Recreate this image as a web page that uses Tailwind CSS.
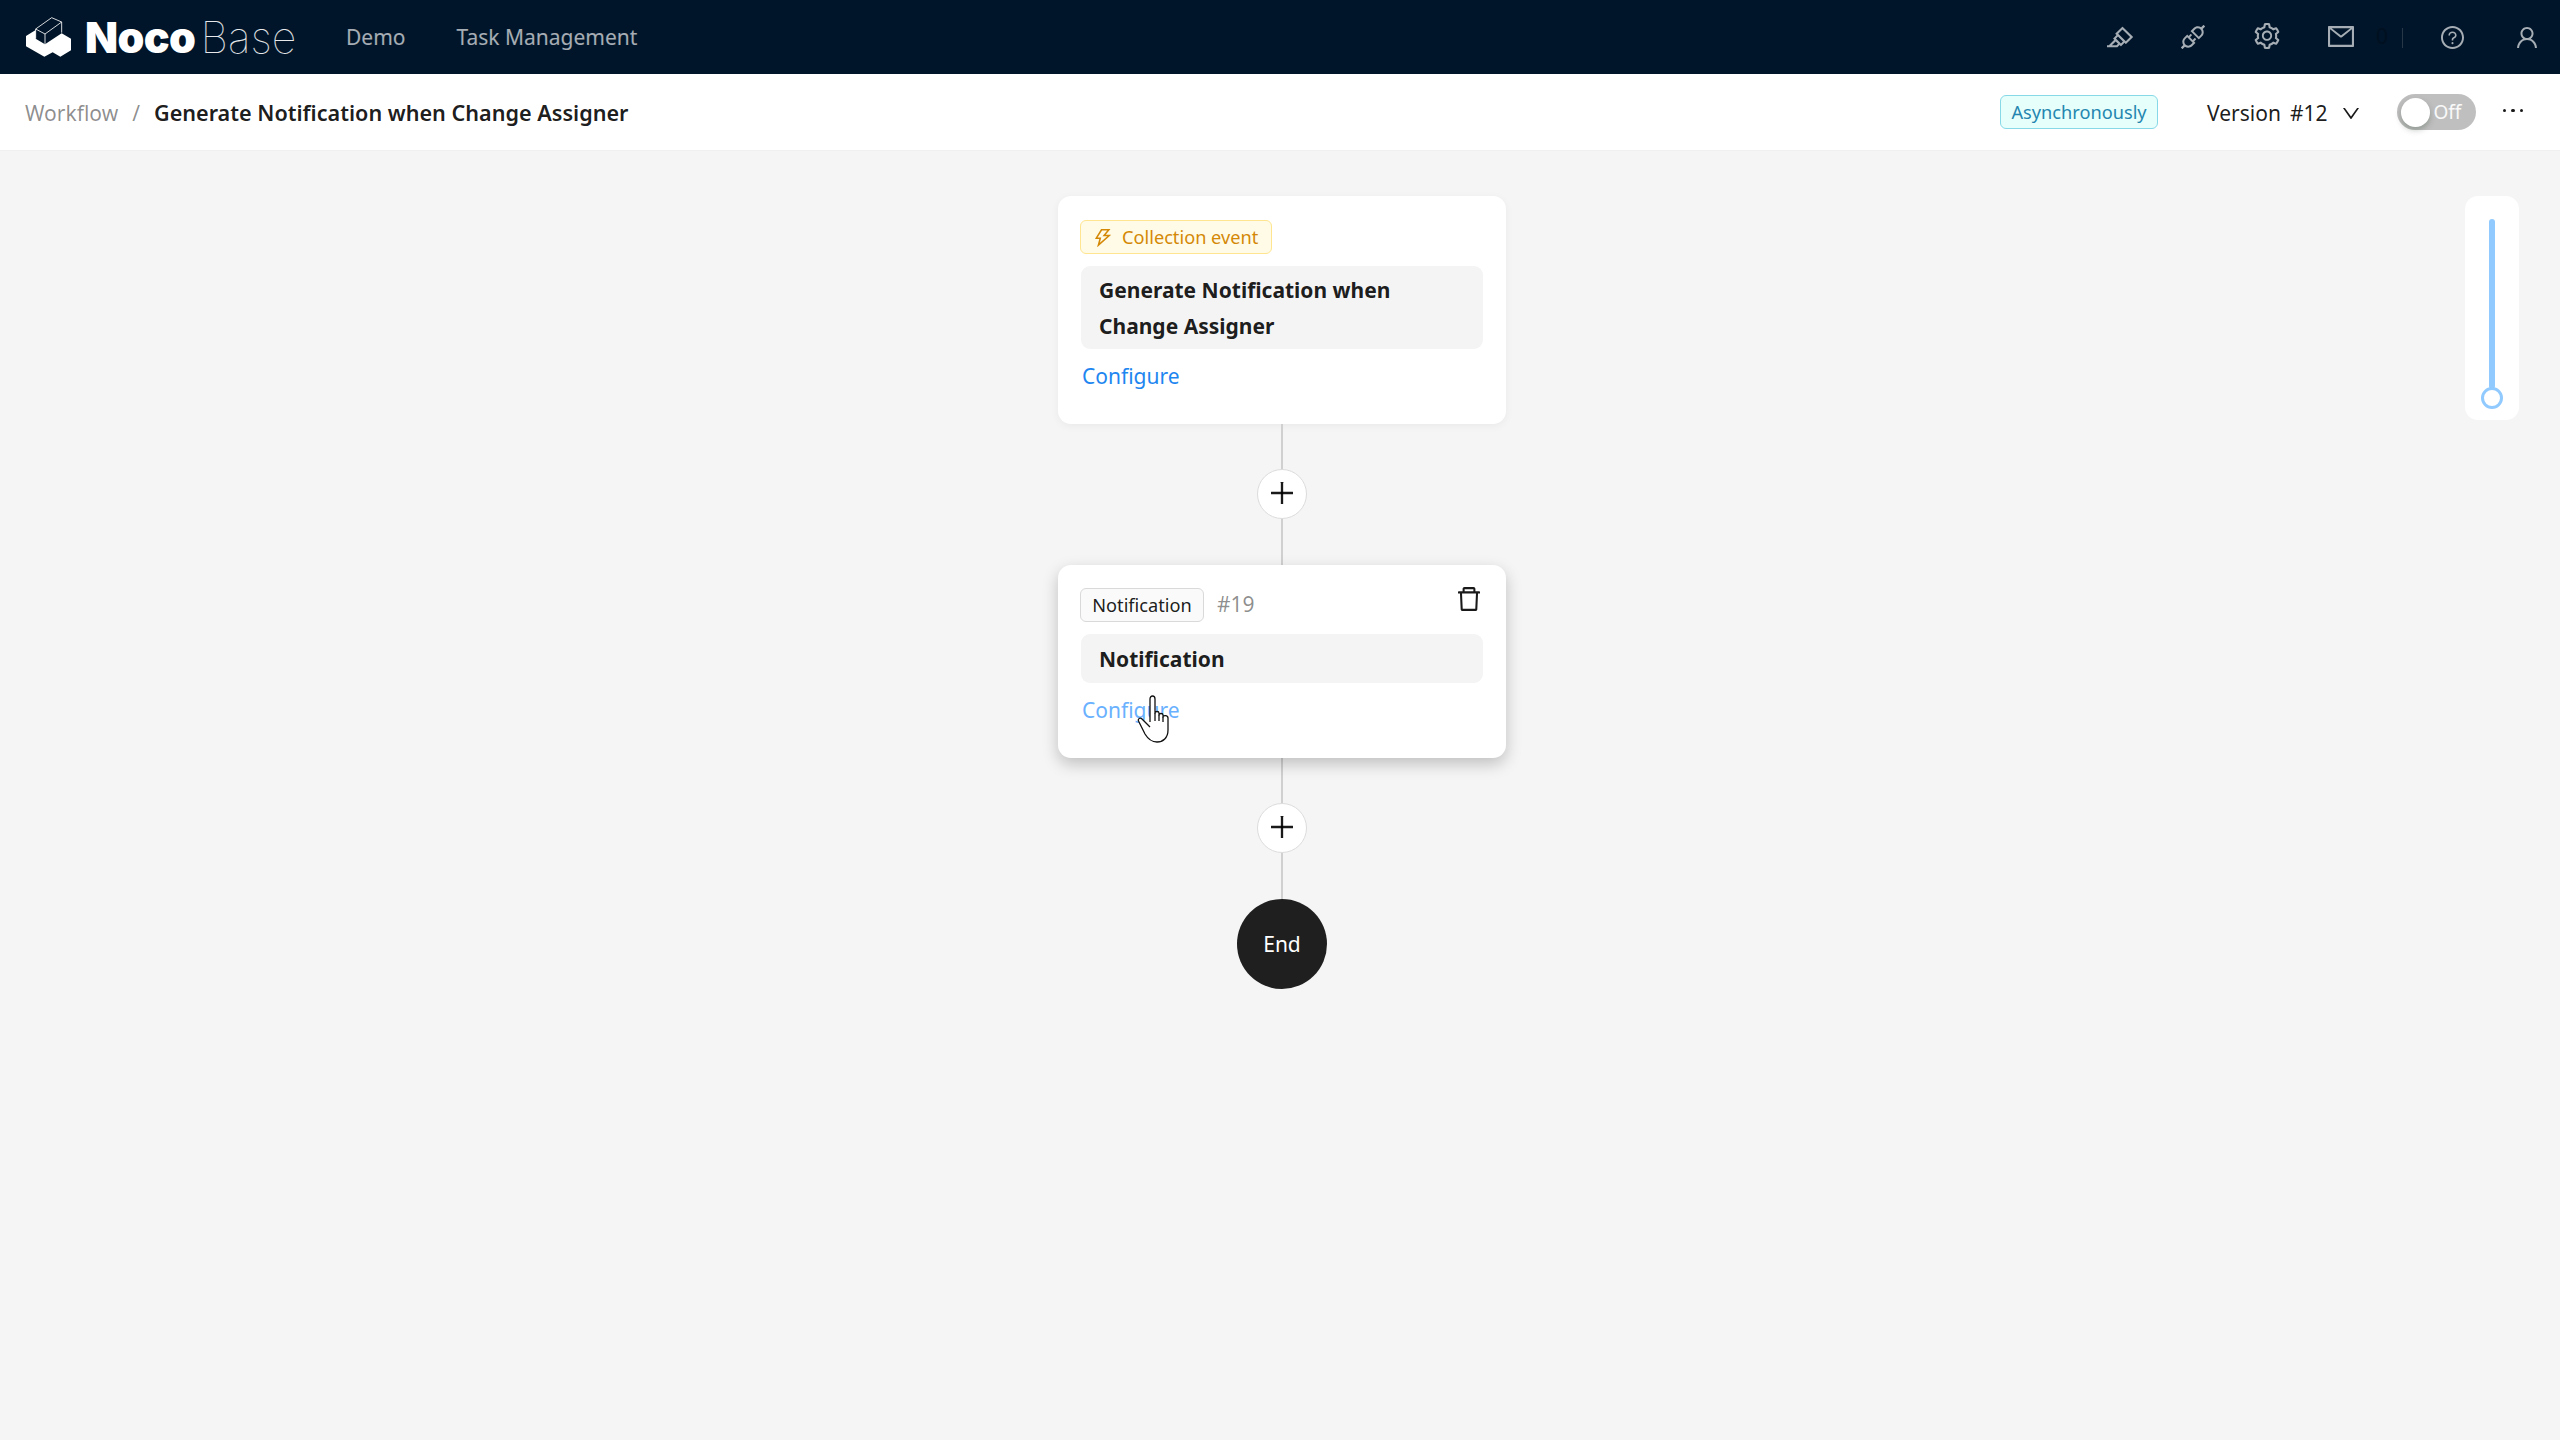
<!DOCTYPE html>
<html lang="en">
  <head>
    <meta charset="UTF-8" />
    <title>NocoBase Workflow</title>
    <script src="https://cdn.jsdelivr.net/npm/@tailwindcss/browser@4"></script>
  </head>
  <body class="bg-[#f5f5f5] font-['Noto_Sans',sans-serif] text-[21px] text-black/90">
    <div class="relative flex flex-col h-[1440px] overflow-hidden">
      <!-- Top nav -->
      <header class="flex items-center h-[74px] bg-[#001529] shrink-0">
        <div class="flex items-center pl-[26px] w-[346px] shrink-0">
          <svg class="w-[45px] h-[40px] shrink-0" viewBox="78 52 135 118">
            <path fill="#fff" d="M78 108L107 90V116L135 133L185 100L213 116V151L181 170L158 157L133 170L78 139Z" />
            <path fill="none" stroke="#fff" stroke-width="2.5" d="M107 87L155 53L185 66V98M107 87L135 102V132M107 87V116M135 102L185 66" />
          </svg>
          <span class="ml-[14px] font-['Inter',sans-serif] font-black text-[43px] leading-none text-white tracking-[-0.6px]">Noco</span>
          <span class="ml-[5px] font-['Inter',sans-serif] font-thin text-[43px] leading-none text-white/90 tracking-[0px]">Base</span>
        </div>
        <nav class="flex items-center gap-[51px] text-white/65 pt-[2px]">
          <a>Demo</a>
          <a>Task Management</a>
        </nav>
        <div class="ml-auto flex items-center text-white/65 h-full pr-[23px]">
          <svg class="w-[26px] h-[26px] fill-current" viewBox="64 128 896 768"><path d="M957.6 507.4L603.2 158.2a7.9 7.9 0 0 0-11.2 0L353.3 393.4a8.03 8.03 0 0 0-.1 11.3l.1.1 40 39.4-117.2 115.3a8.03 8.03 0 0 0-.1 11.3l.1.1 39.5 38.9-189.1 187H72.1c-4.4 0-8.1 3.6-8.1 8V860c0 4.4 3.6 8 8 8h344.9c2.1 0 4.1-.8 5.6-2.3l76.1-75.6 40.4 39.8a7.9 7.9 0 0 0 11.2 0l117.1-115.6 40.1 39.5a7.9 7.9 0 0 0 11.2 0l238.7-235.2c3.4-3 3.4-8 .3-11.2zM389.8 796.2H229.6l134.4-133 80.1 78.9-54.3 54.1zm154.8-62.1L373.2 565.2l68.6-67.6 171.4 168.9-68.6 67.6zM713.1 658L450.3 399.1 597.6 254l262.8 259-147.3 145z"/></svg>
          <svg class="ml-[48px] w-[24px] h-[24px] fill-current" viewBox="104 104 816 816"><path d="M917.7 148.8l-42.4-42.4c-1.6-1.6-3.6-2.3-5.7-2.3s-4.1.8-5.7 2.3l-76.1 76.1a199.27 199.27 0 0 0-112.1-34.3c-51.2 0-102.4 19.5-141.5 58.6L432.3 308.7a8.03 8.03 0 0 0 0 11.3L704 591.7c1.6 1.6 3.6 2.3 5.7 2.3 2 0 4.1-.8 5.7-2.3l101.9-101.9c68.9-69 77-175.7 24.3-253.5l76.1-76.1c3.1-3.2 3.1-8.3 0-11.4zM769.1 441.7l-59.4 59.4-186.8-186.8 59.4-59.4c24.9-24.9 58.1-38.7 93.4-38.7 35.3 0 68.4 13.7 93.4 38.7 24.9 24.9 38.7 58.1 38.7 93.4 0 35.3-13.8 68.4-38.7 93.4zm-190.2 105a8.03 8.03 0 0 0-11.3 0L501 613.3 410.7 523l66.7-66.7c3.1-3.1 3.1-8.2 0-11.3L441 408.6a8.03 8.03 0 0 0-11.3 0L363 475.3l-43-43a7.85 7.85 0 0 0-5.7-2.3c-2 0-4.1.8-5.7 2.3L206.8 534.2c-68.9 69-77 175.7-24.3 253.5l-76.1 76.1a8.03 8.03 0 0 0 0 11.3l42.4 42.4c1.6 1.6 3.6 2.3 5.7 2.3s4.1-.8 5.7-2.3l76.1-76.1c33.7 22.9 72.9 34.3 112.1 34.3 51.2 0 102.4-19.5 141.5-58.6l101.9-101.9c3.1-3.1 3.1-8.2 0-11.3l-43-43 66.7-66.7c3.1-3.1 3.1-8.2 0-11.3l-36.6-36.2zM441.7 769.1a131.32 131.32 0 0 1-93.4 38.7c-35.3 0-68.4-13.7-93.4-38.7a131.32 131.32 0 0 1-38.7-93.4c0-35.3 13.7-68.4 38.7-93.4l59.4-59.4 186.8 186.8-59.4 59.4z"/></svg>
          <svg class="ml-[49px] mt-[-2px] w-[26px] h-[26px] fill-current" viewBox="88 64 848 896"><path d="M924.8 625.7l-65.5-56c3.1-19 4.7-38.4 4.7-57.8s-1.6-38.8-4.7-57.8l65.5-56a32.03 32.03 0 0 0 9.3-35.2l-.9-2.6a443.74 443.74 0 0 0-79.7-137.9l-1.8-2.1a32.12 32.12 0 0 0-35.1-9.5l-81.3 28.9c-30-24.6-63.5-44-99.7-57.6l-15.7-85a32.05 32.05 0 0 0-25.8-25.7l-2.7-.5c-52.1-9.4-106.9-9.4-159 0l-2.7.5a32.05 32.05 0 0 0-25.8 25.7l-15.8 85.4a351.86 351.86 0 0 0-99 57.4l-81.9-29.1a32 32 0 0 0-35.1 9.5l-1.8 2.1a446.02 446.02 0 0 0-79.7 137.9l-.9 2.6c-4.5 12.5-.8 26.5 9.3 35.2l66.3 56.6c-3.1 18.8-4.6 38-4.6 57.1 0 19.2 1.5 38.4 4.6 57.1L99 625.5a32.03 32.03 0 0 0-9.3 35.2l.9 2.6c18.1 50.4 44.9 96.9 79.7 137.9l1.8 2.1a32.12 32.12 0 0 0 35.1 9.5l81.9-29.1c29.8 24.5 63.1 43.9 99 57.4l15.8 85.4a32.05 32.05 0 0 0 25.8 25.7l2.7.5a449.4 449.4 0 0 0 159 0l2.7-.5a32.05 32.05 0 0 0 25.8-25.7l15.7-85a350 350 0 0 0 99.7-57.6l81.3 28.9a32 32 0 0 0 35.1-9.5l1.8-2.1c34.8-41.1 61.6-87.5 79.7-137.9l.9-2.6c4.5-12.3.8-26.3-9.3-35zM788.3 465.9c2.5 15.1 3.8 30.6 3.8 46.1s-1.3 31-3.8 46.1l-6.6 40.1 74.7 63.9a370.03 370.03 0 0 1-42.6 73.6L721 702.8l-31.4 25.8c-23.9 19.6-50.5 35-79.3 45.8l-38.1 14.3-17.9 97a377.5 377.5 0 0 1-85 0l-17.9-97.2-37.8-14.5c-28.5-10.8-55-26.2-78.7-45.7l-31.4-25.9-93.4 33.2c-17-22.9-31.2-47.6-42.6-73.6l75.5-64.5-6.5-40c-2.4-14.9-3.7-30.3-3.7-45.5 0-15.3 1.2-30.6 3.7-45.5l6.5-40-75.5-64.5c11.3-26.1 25.6-50.7 42.6-73.6l93.4 33.2 31.4-25.9c23.7-19.5 50.2-34.9 78.7-45.7l37.9-14.3 17.9-97.2c28.1-3.2 56.8-3.2 85 0l17.9 97 38.1 14.3c28.7 10.8 55.4 26.2 79.3 45.8l31.4 25.8 92.8-32.9c17 22.9 31.2 47.6 42.6 73.6L781.8 426l6.5 39.9zM512 326c-97.2 0-176 78.8-176 176s78.8 176 176 176 176-78.8 176-176-78.8-176-176-176zm79.2 255.2A111.6 111.6 0 0 1 512 614c-29.9 0-58-11.7-79.2-32.8A111.6 111.6 0 0 1 400 502c0-29.9 11.7-58 32.8-79.2C454 401.6 482.1 390 512 390c29.9 0 58 11.6 79.2 32.8A111.6 111.6 0 0 1 624 502c0 29.9-11.7 58-32.8 79.2z"/></svg>
          <svg class="ml-[48px] mt-[-2px] w-[26px] h-[21px] fill-current" viewBox="64 160 896 704" preserveAspectRatio="none"><path d="M928 160H96c-17.7 0-32 14.3-32 32v640c0 17.7 14.3 32 32 32h832c17.7 0 32-14.3 32-32V192c0-17.7-14.3-32-32-32zm-40 110.8V792H136V270.8l-27.6-21.5 39.3-50.5 42.8 33.3h643.1l42.8-33.3 39.3 50.5-27.7 21.5zM833.6 232L512 482 190.4 232l-42.8-33.3-39.3 50.5 27.6 21.5 341.6 265.6a55.99 55.99 0 0 0 68.7 0L888 270.8l27.6-21.5-39.3-50.5-42.7 33.2z"/></svg>
          <span class="ml-[22px] w-[26px] text-[#001020]">0</span>
          <span class="w-px h-[20px] bg-white/15 mt-[2px]"></span>
          <svg class="ml-[38px] mt-[1px] w-[23px] h-[23px] fill-current" viewBox="64 64 896 896"><path d="M512 64C264.6 64 64 264.6 64 512s200.6 448 448 448 448-200.6 448-448S759.4 64 512 64zm0 820c-205.4 0-372-166.6-372-372s166.6-372 372-372 372 166.6 372 372-166.6 372-372 372z"/><path d="M623.6 316.7C593.6 290.4 554 276 512 276s-81.6 14.5-111.6 40.7C369.2 344 352 380.7 352 420v7.6c0 4.4 3.6 8 8 8h48c4.4 0 8-3.6 8-8V420c0-44.1 43.1-80 96-80s96 35.9 96 80c0 31.1-22 59.6-56.1 72.7-21.2 8.1-39.2 22.3-52.1 40.9-13.1 19-19.9 41.8-19.9 64.9V620c0 4.4 3.6 8 8 8h48c4.4 0 8-3.6 8-8v-22.7a48.3 48.3 0 0 1 30.9-44.8c59-22.7 97.1-74.7 97.1-132.5.1-39.3-17.1-76-48.3-103.3zM472 732a40 40 0 1 0 80 0 40 40 0 1 0-80 0z"/></svg>
          <svg class="ml-[53px] mt-[1px] w-[20px] h-[21px] fill-current" viewBox="136 114 752 796"><path d="M858.5 763.6a374 374 0 0 0-80.6-119.5 375.63 375.63 0 0 0-119.5-80.6c-.4-.2-.8-.3-1.2-.5C719.5 518 760 444.7 760 362c0-137-111-248-248-248S264 225 264 362c0 82.7 40.5 156 102.8 201.1-.4.2-.8.3-1.2.5-44.8 18.9-85 46-119.5 80.6a375.63 375.63 0 0 0-80.6 119.5A371.7 371.7 0 0 0 136 901.8a8 8 0 0 0 8 8.2h60c4.4 0 7.9-3.5 8-7.8 2-77.2 33-149.5 87.8-204.3 56.7-56.7 132-87.9 212.2-87.9s155.5 31.2 212.2 87.9C779 752.7 810 825 812 902.2c.1 4.4 3.6 7.8 8 7.8h60a8 8 0 0 0 8-8.2c-1-47.8-10.9-94.3-29.5-138.2zM512 534c-45.9 0-89.1-17.9-121.6-50.4S340 407.9 340 362c0-45.9 17.9-89.1 50.4-121.6S466.1 190 512 190s89.1 17.9 121.6 50.4S684 316.1 684 362c0 45.9-17.9 89.1-50.4 121.6S557.9 534 512 534z"/></svg>
        </div>
      </header>

      <!-- Breadcrumb bar -->
      <div class="flex items-center h-[77px] shrink-0 bg-white border-b border-[#f0f0f0] pl-[25px] pr-[37px]">
        <span class="text-black/45 pt-[3px]">Workflow</span>
        <span class="mx-[14px] text-black/45 pt-[3px]">/</span>
        <span class="font-semibold text-[21.6px] text-black/90 pt-[2px]">Generate Notification when Change Assigner</span>
        <span class="ml-auto flex items-center justify-center w-[158px] h-[34px] rounded-[6px] border border-[#87d9e8] bg-[#e6fffb] text-[#2486b0] text-[18.2px] pt-[2px]">Asynchronously</span>
        <span class="ml-[49px] pt-[3px]">Version</span>
        <span class="ml-[9px] pt-[3px]">#12</span>
        <svg class="ml-[15px] mt-[2px] w-[16px] h-[11px] fill-current" viewBox="128 256 768 512" preserveAspectRatio="none"><path d="M884 256h-75c-5.1 0-9.9 2.5-12.9 6.6L512 654.2 227.9 262.6c-3-4.1-7.8-6.6-12.9-6.6h-75c-6.5 0-10.3 7.4-6.5 12.7l352.6 486.1c12.8 17.6 39 17.6 51.7 0l352.6-486.1c3.9-5.3.1-12.7-6.4-12.7z"/></svg>
        <span class="ml-[38px] flex items-center w-[79px] h-[36px] rounded-full bg-black/25 pl-[4px]">
          <span class="w-[29px] h-[29px] rounded-full bg-white shadow-[0_3px_6px_rgba(0,35,11,0.25)]"></span>
          <span class="ml-[4px] text-white/90 text-[19px]">Off</span>
        </span>
        <span class="ml-[27px] flex items-center gap-[5px] mb-[3px]">
          <span class="w-[3.5px] h-[3.5px] rounded-full bg-black/90"></span>
          <span class="w-[3.5px] h-[3.5px] rounded-full bg-black/90"></span>
          <span class="w-[3.5px] h-[3.5px] rounded-full bg-black/90"></span>
        </span>
      </div>

      <!-- Canvas -->
      <main class="flex flex-col items-center flex-1 pt-[45px] pl-[4px]">
        <section class="w-[448px] h-[228px] rounded-[13px] bg-white shadow-[0_2px_8px_rgba(0,0,0,0.05)] pl-[22px] pr-[23px] pt-[24px]">
          <span class="flex items-center w-[192px] h-[34px] rounded-[6px] border border-[#ffe58f] bg-[#fffbe6] text-[#d48806] text-[18.2px] pl-[14px] pt-[1px]">
            <svg class="w-[16px] h-[18px] fill-current shrink-0" viewBox="168 96 688 832" preserveAspectRatio="none"><path d="M848 359.3H627.7L825.8 109c4.1-5.3.4-13-6.3-13H436c-2.8 0-5.5 1.5-6.9 4L170 547.5c-3.1 5.3.7 12 6.9 12h174.4l-89.4 357.6c-1.9 7.8 7.5 13.3 13.3 7.7L853.5 373c5.2-4.9 1.7-13.7-5.5-13.7zM378.2 732.5l60.3-241H281.1l189.6-327.4h224.6L487 427.4h211L378.2 732.5z"/></svg>
            <span class="ml-[11px]">Collection event</span>
          </span>
          <div class="mt-[12px] w-[402px] h-[83px] ml-[1px] rounded-[9px] bg-[#f4f4f4] px-[18px] pt-[6px] font-bold leading-[36px]">Generate Notification when<br />Change Assigner</div>
          <a class="block mt-[11px] ml-[2px] text-[#1e86f0] leading-[32px]">Configure</a>
        </section>
        <div class="w-[2px] h-[45px] bg-[#d0d0d0]"></div>
        <button class="flex items-center justify-center w-[50px] h-[50px] rounded-full bg-white border border-[#dcdcdc]">
          <svg class="mt-[-2px] w-[22px] h-[22px] fill-current" viewBox="152 152 720 720"><path d="M482 152h60q8 0 8 8v704q0 8-8 8h-60q-8 0-8-8V160q0-8 8-8Z"/><path d="M160 474h704q8 0 8 8v60q0 8-8 8H160q-8 0-8-8v-60q0-8 8-8Z"/></svg>
        </button>
        <div class="w-[2px] h-[46px] bg-[#d0d0d0]"></div>
        <section class="relative w-[448px] h-[193px] rounded-[13px] bg-white shadow-[0_6px_16px_rgba(0,0,0,0.22)] pl-[22px] pr-[26px] pt-[23px]">
          <div class="flex items-center">
            <span class="flex items-center justify-center w-[124px] h-[34px] rounded-[6px] border border-[#d9d9d9] bg-[#fafafa] text-[18.2px] pt-[1px]">Notification</span>
            <span class="ml-[13px] text-black/45">#19</span>
            <svg class="ml-auto mt-[-12px] w-[22px] h-[24px] fill-current" viewBox="128 112 768 800" preserveAspectRatio="none"><path d="M360 184h-8c4.4 0 8-3.6 8-8v8h304v-8c0 4.4 3.6 8 8 8h-8v72h72v-80c0-35.3-28.7-64-64-64H352c-35.3 0-64 28.7-64 64v80h72v-72zm504 72H160c-17.7 0-32 14.3-32 32v32c0 4.4 3.6 8 8 8h60.4l24.7 523c1.6 34.1 29.8 61 63.9 61h454c34.2 0 62.3-26.8 63.9-61l24.7-523H888c4.4 0 8-3.6 8-8v-32c0-17.7-14.3-32-32-32zM731.3 840H292.7l-24.2-512h487l-24.2 512z"/></svg>
          </div>
          <div class="mt-[12px] w-[402px] h-[49px] ml-[1px] flex items-center rounded-[9px] bg-[#f4f4f4] px-[18px] pt-[3px] font-bold">Notification</div>
          <a class="block mt-[11px] ml-[2px] text-[#69b1ff] leading-[32px]">Configure</a>
          <!-- pointer cursor -->
          <svg class="absolute left-[79px] top-[130px] w-[34px] h-[48px]" viewBox="0 0 34 48">
            <path fill="#fff" stroke="#111" stroke-width="1.3" stroke-linejoin="round" d="M13 27V4c0-4 5-4 5 0v14c0-2 4-2 4 0v2c0-2 4-2 4 0v2c0-2 5-2 5 1v12c0 8-5 12-11 12-6 0-9-3-12-8L2 27c-2-3 1-5 3-3l8 8" />
            <path fill="none" stroke="#111" stroke-width="1.3" d="M18 18v8M22 20v6M26 22v5" />
          </svg>
        </section>
        <div class="w-[2px] h-[45px] bg-[#d0d0d0]"></div>
        <button class="flex items-center justify-center w-[50px] h-[50px] rounded-full bg-white border border-[#dcdcdc]">
          <svg class="mt-[-2px] w-[22px] h-[22px] fill-current" viewBox="152 152 720 720"><path d="M482 152h60q8 0 8 8v704q0 8-8 8h-60q-8 0-8-8V160q0-8 8-8Z"/><path d="M160 474h704q8 0 8 8v60q0 8-8 8H160q-8 0-8-8v-60q0-8 8-8Z"/></svg>
        </button>
        <div class="w-[2px] h-[46px] bg-[#d0d0d0]"></div>
        <div class="flex items-center justify-center w-[90px] h-[90px] rounded-full bg-[#1f1f1f] text-white pt-[2px]">End</div>
      </main>

      <!-- Zoom slider -->
      <div class="absolute left-[2465px] top-[196px] w-[54px] h-[224px] rounded-[13px] bg-white">
        <div class="absolute left-[24px] top-[23px] w-[6px] h-[170px] rounded-full bg-[#91caff]"></div>
        <div class="absolute left-[16px] top-[191px] w-[22px] h-[22px] rounded-full bg-white border-[3px] border-[#91caff]"></div>
      </div>
    </div>
  </body>
</html>
